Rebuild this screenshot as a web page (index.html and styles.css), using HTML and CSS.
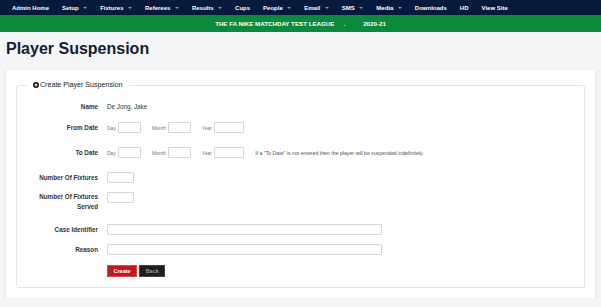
FILE: index.html
```html
<!DOCTYPE html>
<html lang="en">
<head>
  <meta charset="UTF-8">
  <meta name="viewport" content="width=device-width, initial-scale=1.0">
  <title>Player Suspension</title>
  <link rel="stylesheet" href="styles.css">
</head>
<body>
  <nav class="topnav">
    <a class="nav-item">Admin Home</a>
    <a class="nav-item">Setup<span class="caret"></span></a>
    <a class="nav-item">Fixtures<span class="caret"></span></a>
    <a class="nav-item">Referees<span class="caret"></span></a>
    <a class="nav-item">Results<span class="caret"></span></a>
    <a class="nav-item">Cups</a>
    <a class="nav-item">People<span class="caret"></span></a>
    <a class="nav-item">Email<span class="caret"></span></a>
    <a class="nav-item">SMS<span class="caret"></span></a>
    <a class="nav-item">Media<span class="caret"></span></a>
    <a class="nav-item">Downloads</a>
    <a class="nav-item">HD</a>
    <a class="nav-item">View Site</a>
  </nav>
  <div class="banner">
    <span>THE FA NIKE MATCHDAY TEST LEAGUE</span>
    <span class="banner-dot">.</span>
    <span>2020-21</span>
  </div>

  <h1 class="page-title">Player Suspension</h1>

  <div class="card">
    <form class="form" onsubmit="event.preventDefault();">
      <fieldset class="panel">
        <legend class="panel-legend">
          <svg class="legend-icon" viewBox="0 0 12 12" width="6" height="6">
            <circle cx="6" cy="6" r="6" fill="#111"/>
            <path d="M6 2.8v6.4M2.8 6h6.4" stroke="#fff" stroke-width="2"/>
          </svg>Create Player Suspension
        </legend>

        <div class="row">
          <label>Name</label>
          <span class="value">De Jong, Jake</span>
        </div>

        <div class="row row-date">
          <label>From Date</label>
          <div class="date-group">
            <span class="mini">Day</span><input type="text" class="in-day">
            <span class="mini gap">Month</span><input type="text" class="in-day">
            <span class="mini gap">Year</span><input type="text" class="in-year">
          </div>
        </div>

        <div class="row row-date">
          <label>To Date</label>
          <div class="date-group">
            <span class="mini">Day</span><input type="text" class="in-day">
            <span class="mini gap">Month</span><input type="text" class="in-day">
            <span class="mini gap">Year</span><input type="text" class="in-year">
            <span class="note">If a "To Date" is not entered then the player will be suspended indefinitely.</span>
          </div>
        </div>

        <div class="row row-fix">
          <label>Number Of Fixtures</label>
          <div><input type="text" class="in-num"></div>
        </div>

        <div class="row row-tall">
          <label>Number Of Fixtures<br>Served</label>
          <div><input type="text" class="in-num"></div>
        </div>

        <div class="row row-case">
          <label>Case Identifier</label>
          <div><input type="text" class="in-wide"></div>
        </div>

        <div class="row">
          <label>Reason</label>
          <div><input type="text" class="in-wide"></div>
        </div>

        <div class="row row-last">
          <span></span>
          <div class="actions">
            <button type="submit" class="btn btn-create">Create</button>
            <button type="button" class="btn btn-back">Back</button>
          </div>
        </div>
      </fieldset>
    </form>
  </div>
</body>
</html>
```

FILE: styles.css
```css
body {
  margin: 0;
  background: #f4f5f7;
  font-family: "Liberation Sans", Arial, sans-serif;
  color: #333;
}
.topnav {
  display: flex;
  align-items: center;
  gap: 13px;
  height: 15px;
  padding-left: 12px;
  background: #061a3d;
}
.nav-item {
  display: inline-flex;
  align-items: center;
  color: #fff;
  font-size: 6px;
  font-weight: bold;
  white-space: nowrap;
}
.caret {
  width: 0;
  height: 0;
  margin-left: 4.5px;
  border-top: 2.5px solid #8b95a8;
  border-left: 2.5px solid transparent;
  border-right: 2.5px solid transparent;
}
.banner {
  display: flex;
  align-items: center;
  justify-content: center;
  height: 17px;
  background: #0b8a3e;
  color: #fff;
  font-size: 6.2px;
  font-weight: bold;
}
.banner-dot {
  margin: 0 18px 0 9px;
}
.page-title {
  margin: 7px 0 11px 6px;
  font-size: 16px;
  line-height: 20px;
  font-weight: bold;
  color: #141d31;
}
.card {
  margin: 0 6px;
  padding: 10px 10px 10px;
  background: #fff;
  box-shadow: 0 1px 3px rgba(0,0,0,0.12);
}
.panel {
  margin: 0;
  padding: 11px 0 10px;
  border: 1px solid #e4e4e4;
  border-radius: 2px;
}
.panel-legend {
  margin-left: 10px;
  padding: 0 7px 0 6px;
  font-size: 7.1px;
  line-height: 10px;
  color: #222;
}
.legend-icon {
  vertical-align: -0.5px;
  margin-right: 1px;
}
.row {
  display: grid;
  grid-template-columns: 81px 1fr;
  column-gap: 9px;
  align-items: center;
  min-height: 11px;
  margin-bottom: 10px;
}
.row label {
  text-align: right;
  font-size: 6.3px;
  font-weight: bold;
  color: #333;
}
.row-date {
  margin-bottom: 14px;
}
.row-fix {
  margin-bottom: 9px;
}
.row-tall {
  align-items: start;
  margin-bottom: 12px;
}
.row-tall label {
  line-height: 10px;
}
.row-case {
  margin-bottom: 9px;
}
.row-last {
  margin-bottom: 0;
}
.value {
  font-size: 6.3px;
  color: #333;
}
.date-group {
  display: flex;
  align-items: center;
}
.mini {
  font-size: 5px;
  color: #777;
  margin-right: 2.3px;
}
.mini.gap {
  margin-left: 10.7px;
}
.note {
  margin-left: 11px;
  font-size: 5.2px;
  color: #555;
  white-space: nowrap;
}
input[type='text'] {
  display: block;
  box-sizing: border-box;
  height: 11px;
  padding: 0;
  border: 1px solid #d6d6d6;
  border-radius: 1px;
  background: #fff;
}
.in-day {
  width: 23px;
}
.in-year {
  width: 30px;
}
.in-num {
  width: 27px;
}
.in-wide {
  width: 275px;
}
.actions {
  display: flex;
  gap: 2px;
}
.btn {
  height: 12px;
  padding: 0 5.5px;
  border: 1px solid transparent;
  font-family: "Liberation Sans", Arial, sans-serif;
  font-size: 5.5px;
  font-weight: bold;
  cursor: pointer;
}
.btn-create {
  background: #c8161d;
  border-color: #d94a4f;
  color: #fff;
}
.btn-back {
  background: #1e1f21;
  border-color: #444;
  color: #9a9a9a;
}
```
